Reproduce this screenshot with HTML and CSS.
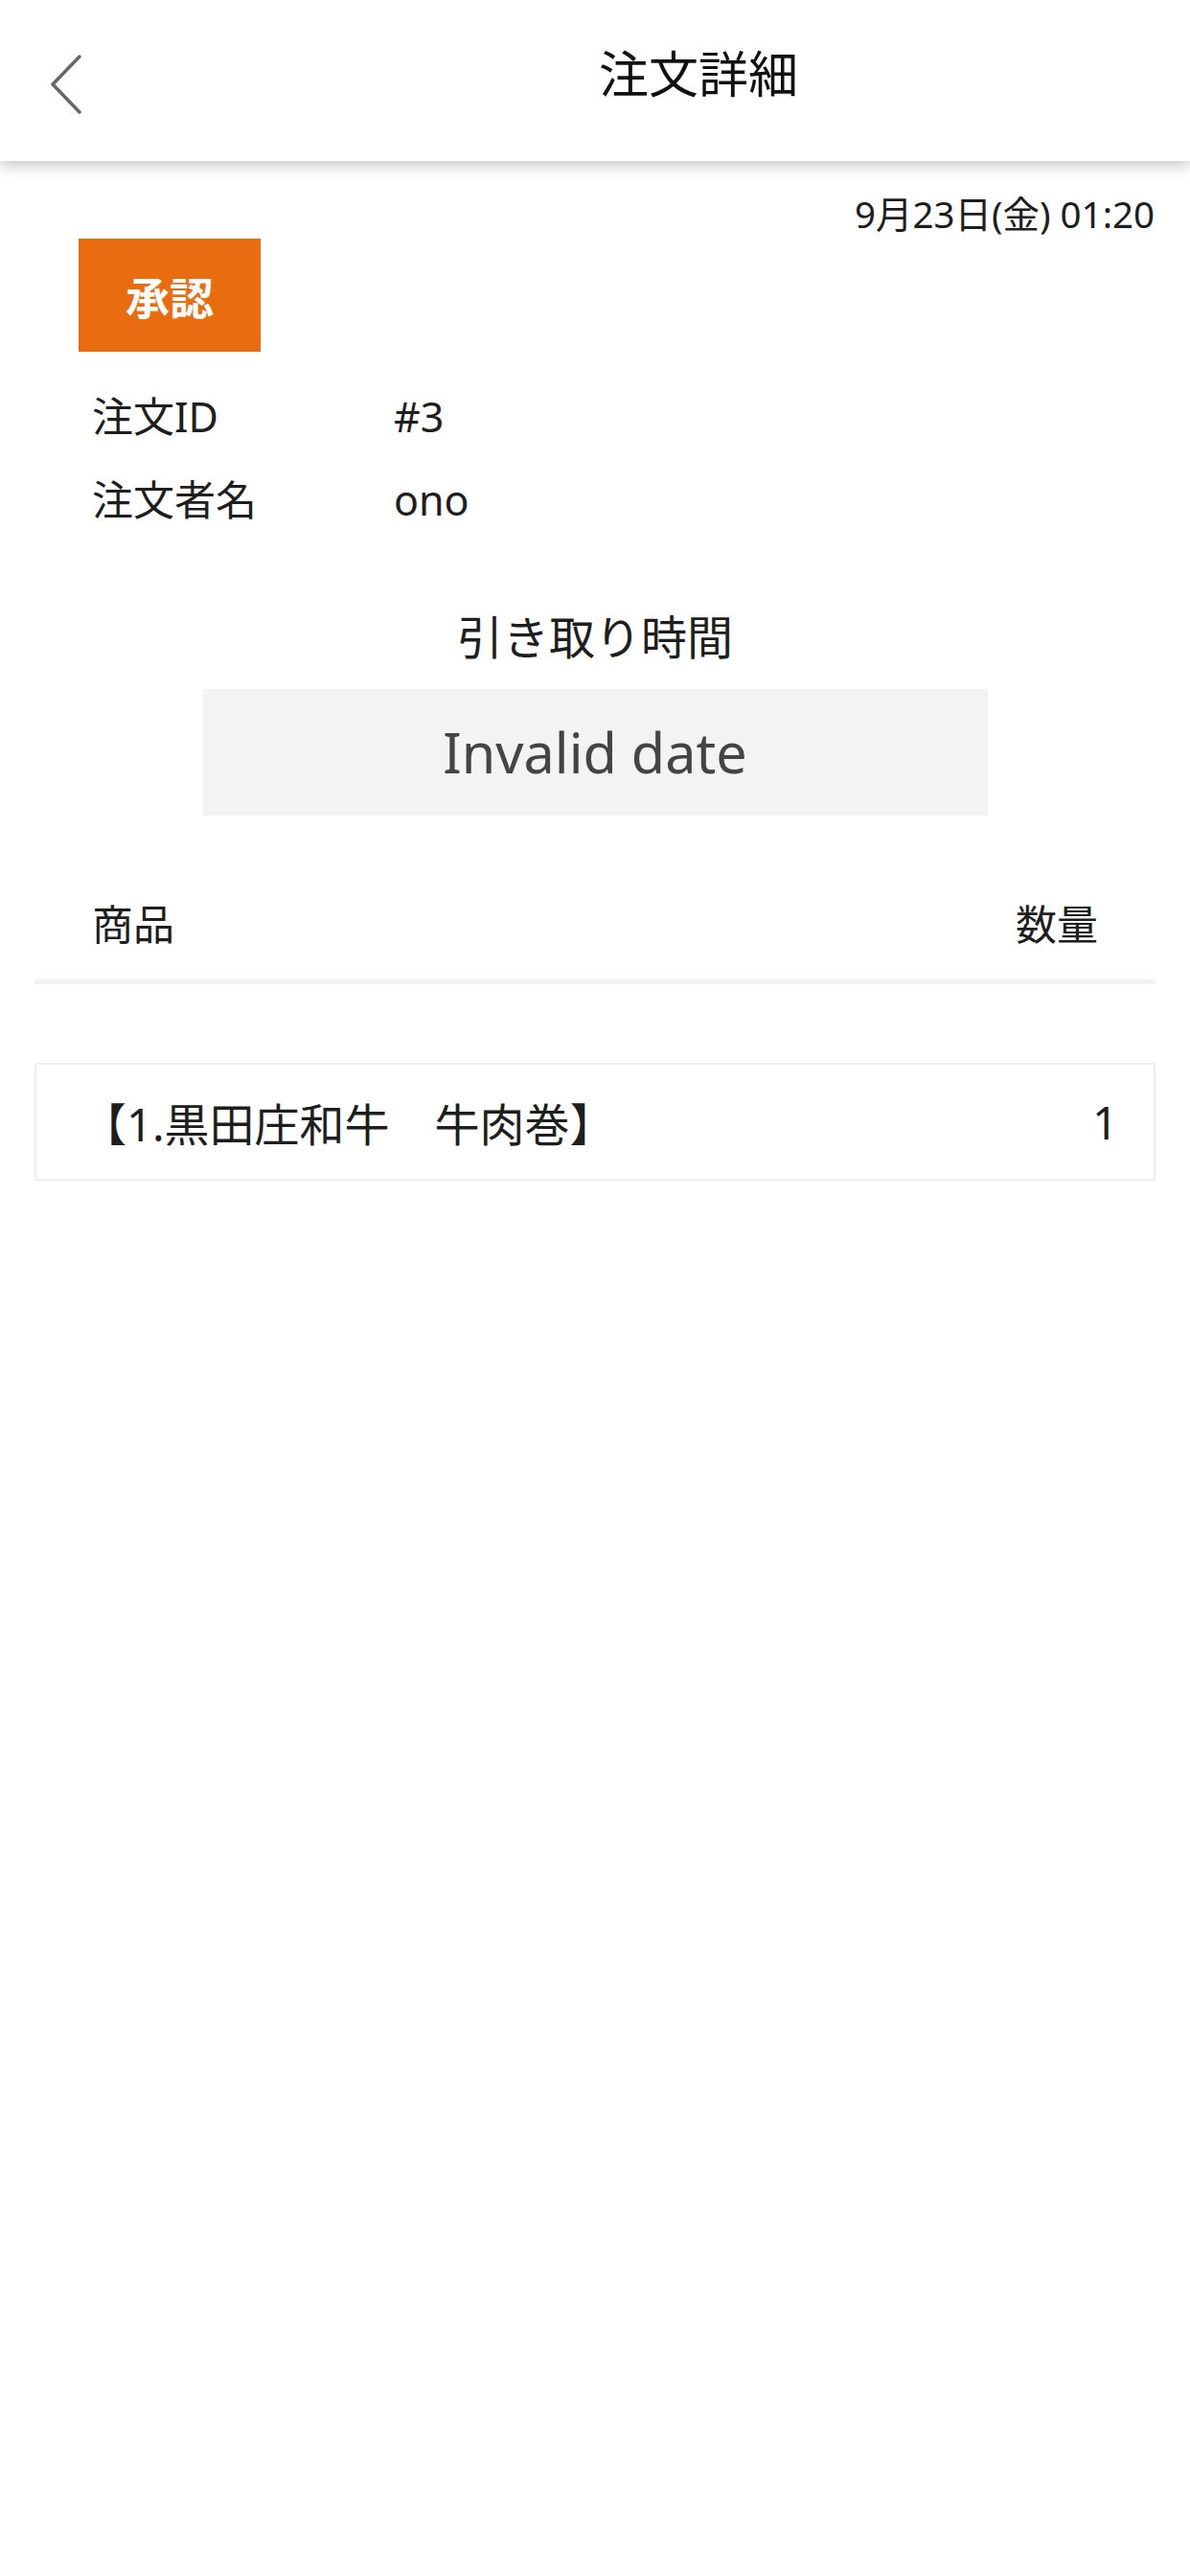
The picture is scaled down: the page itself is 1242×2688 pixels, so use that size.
FILE: index.html
```html
<!DOCTYPE html>
<html lang="ja">
<head>
    <meta charset="UTF-8">
    <meta name="viewport" content="width=device-width, initial-scale=1">
    <title>注文詳細</title>
    <link rel="stylesheet" href="styles.css">
</head>
<body>
    <header class="topbar">
        <a class="back" href="#">
            <svg width="34" height="62" viewBox="0 0 34 62">
                <path d="M31 2 L3 31 L31 60" fill="none" stroke="#666" stroke-width="3.5" stroke-linecap="round" stroke-linejoin="round"/>
            </svg>
        </a>
        <h1 class="title">注文詳細</h1>
    </header>

    <main class="content">
        <div class="ordered-at">9月23日(金) 01:20</div>
        <div class="status">承認</div>

        <dl class="info">
            <div class="info-row"><dt>注文ID</dt><dd>#3</dd></div>
            <div class="info-row"><dt>注文者名</dt><dd>ono</dd></div>
        </dl>

        <h2 class="pickup-label">引き取り時間</h2>
        <div class="pickup-time">Invalid date</div>

        <div class="items-head">
            <span>商品</span>
            <span>数量</span>
        </div>

        <ul class="items">
            <li class="item">
                <span class="item-name">【1.黒田庄和牛　牛肉巻】</span>
                <span class="item-qty">1</span>
            </li>
        </ul>
    </main>
</body>
</html>
```

FILE: styles.css
```css
body {
    margin: 0;
    background: #fff;
    color: #1e1e1e;
    font-family: "Noto Sans", "Noto Sans CJK JP", sans-serif;
}

/* header bar */
.topbar {
    display: flex;
    align-items: flex-start;
    height: 168px;
    background: #fff;
    box-shadow: 0 5px 14px rgba(0, 0, 0, 0.22);
    position: relative;
}
.back {
    display: block;
    width: 164px;
    padding: 57px 0 0 52px;
    flex-shrink: 0;
}
.back svg {
    display: block;
}
.title {
    flex: 1;
    margin: 51px 0 0;
    font-size: 52px;
    line-height: 52px;
    font-weight: 400;
    text-align: center;
    color: #111;
}

.content {
    padding: 0 36px;
}

.ordered-at {
    margin-top: 36px;
    padding-right: 1px;
    text-align: right;
    font-size: 38.5px;
    line-height: 38px;
}

.status {
    width: 190px;
    height: 118px;
    margin: 7px 0 0 46px;
    background: #e96c11;
    color: #fff;
    font-size: 46px;
    font-weight: 700;
    display: flex;
    align-items: center;
    justify-content: center;
}

/* order info */
.info {
    margin: 24px 0 0;
    padding-left: 60px;
}
.info-row {
    display: flex;
    font-size: 43px;
    line-height: 87px;
}
.info-row dt {
    width: 315px;
}
.info-row dd {
    margin: 0;
}

.pickup-label {
    margin: 76px 0 0;
    font-size: 48px;
    line-height: 48px;
    font-weight: 400;
    text-align: center;
}
.pickup-time {
    width: 819px;
    height: 132px;
    margin: 30px auto 0;
    background: #f3f3f3;
    color: #444;
    font-size: 57.5px;
    display: flex;
    align-items: center;
    justify-content: center;
}

/* item list */
.items-head {
    display: flex;
    justify-content: space-between;
    margin-top: 93px;
    padding: 0 60px 36px;
    font-size: 43px;
    line-height: 42px;
    border-bottom: 5px solid #f2f2f2;
}

.items {
    list-style: none;
    margin: 82px 0 0;
    padding: 0;
}
.item {
    display: flex;
    justify-content: space-between;
    align-items: center;
    height: 119px;
    padding: 0 37px 0 47px;
    border: 2px solid #efefef;
    font-size: 47px;
}
```
